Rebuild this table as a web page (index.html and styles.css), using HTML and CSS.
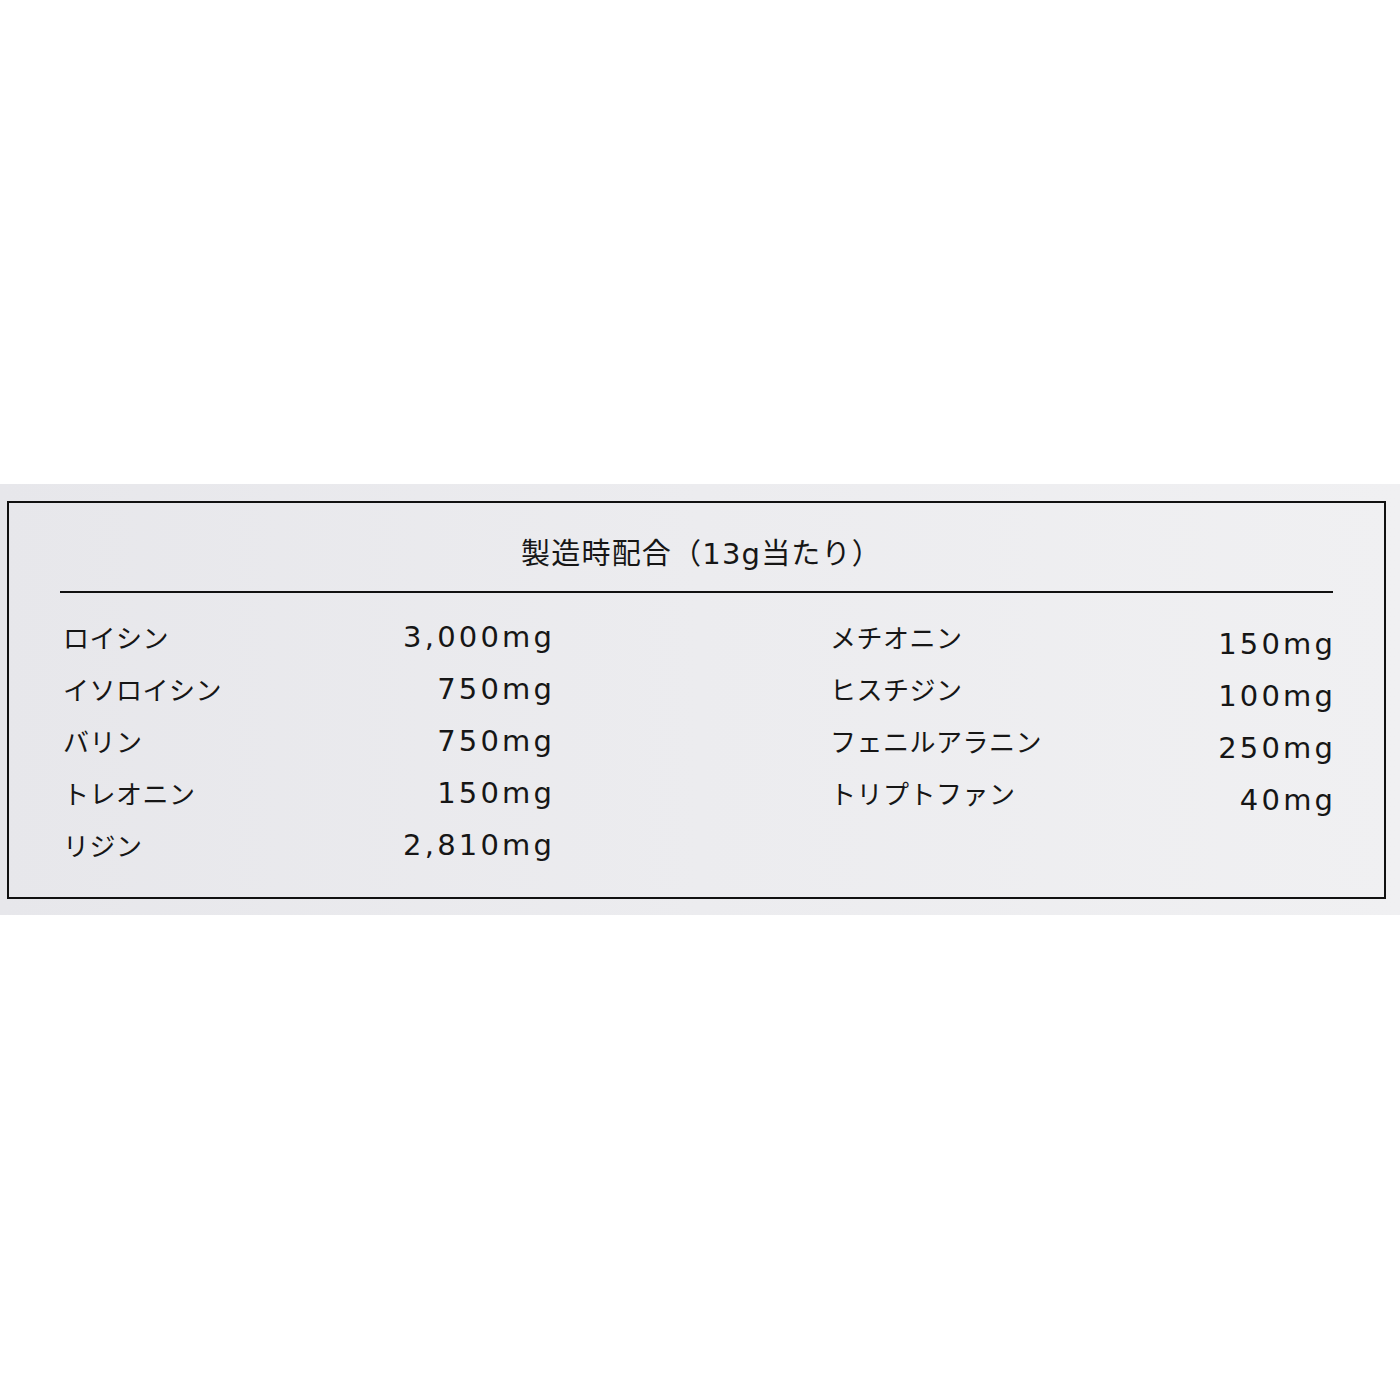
FILE: index.html
```html
<!DOCTYPE html>
<html lang="ja">
<head>
<meta charset="utf-8">
<title>製造時配合</title>
<link rel="stylesheet" href="styles.css">
</head>
<body>
<div class="band">
  <div class="card">
    <div class="title">製造時配合（13g当たり）</div>
    <div class="rule"></div>
    <div class="table">
      <div class="group">
        <div class="names">
          <div class="cell">ロイシン</div>
          <div class="cell">イソロイシン</div>
          <div class="cell">バリン</div>
          <div class="cell">トレオニン</div>
          <div class="cell">リジン</div>
        </div>
        <div class="values">
          <div class="cell">3,000mg</div>
          <div class="cell">750mg</div>
          <div class="cell">750mg</div>
          <div class="cell">150mg</div>
          <div class="cell">2,810mg</div>
        </div>
      </div>
      <div class="spacer"></div>
      <div class="group">
        <div class="names">
          <div class="cell">メチオニン</div>
          <div class="cell">ヒスチジン</div>
          <div class="cell">フェニルアラニン</div>
          <div class="cell">トリプトファン</div>
        </div>
        <div class="values shifted">
          <div class="cell">150mg</div>
          <div class="cell">100mg</div>
          <div class="cell">250mg</div>
          <div class="cell">40mg</div>
        </div>
      </div>
    </div>
  </div>
</div>
</body>
</html>
```

FILE: styles.css
```css
html, body {
  margin: 0;
  padding: 0;
  background: #ffffff;
}
body {
  width: 1400px;
  height: 1400px;
  font-family: "Noto Sans CJK JP", "Noto Sans", sans-serif;
  color: #161616;
}
.band {
  margin-top: 484px;
  height: 431px;
  background: linear-gradient(90deg, #e7e7eb 0%, #ececef 50%, #f0f0f2 100%);
  padding-top: 17px;
  box-sizing: border-box;
}
.card {
  margin-left: 7px;
  width: 1379px;
  height: 398px;
  box-sizing: border-box;
  border: 2px solid #111111;
  padding: 31px 51px 0 51px;
}
.title {
  height: 40px;
  line-height: 40px;
  text-align: center;
  font-family: "DejaVu Sans", "Noto Sans CJK JP", sans-serif;
  font-size: 29px;
  letter-spacing: 1.2px;
  padding-left: 10px;
}
.rule {
  margin-top: 17px;
  height: 2px;
  background: #111111;
}
.table {
  margin-top: 18px;
  margin-left: 3px;
  display: grid;
  grid-template-columns: 489px 278px 503px;
}
.group {
  display: flex;
  justify-content: space-between;
}
.cell {
  height: 52px;
  line-height: 52px;
  white-space: nowrap;
}
.names .cell {
  font-size: 26px;
  letter-spacing: 0.5px;
}
.values {
  text-align: right;
}
.values .cell {
  font-family: "DejaVu Sans", sans-serif;
  font-size: 29px;
  letter-spacing: 3.2px;
  margin-right: -3.2px;
}
.shifted {
  padding-top: 7px;
}
```
